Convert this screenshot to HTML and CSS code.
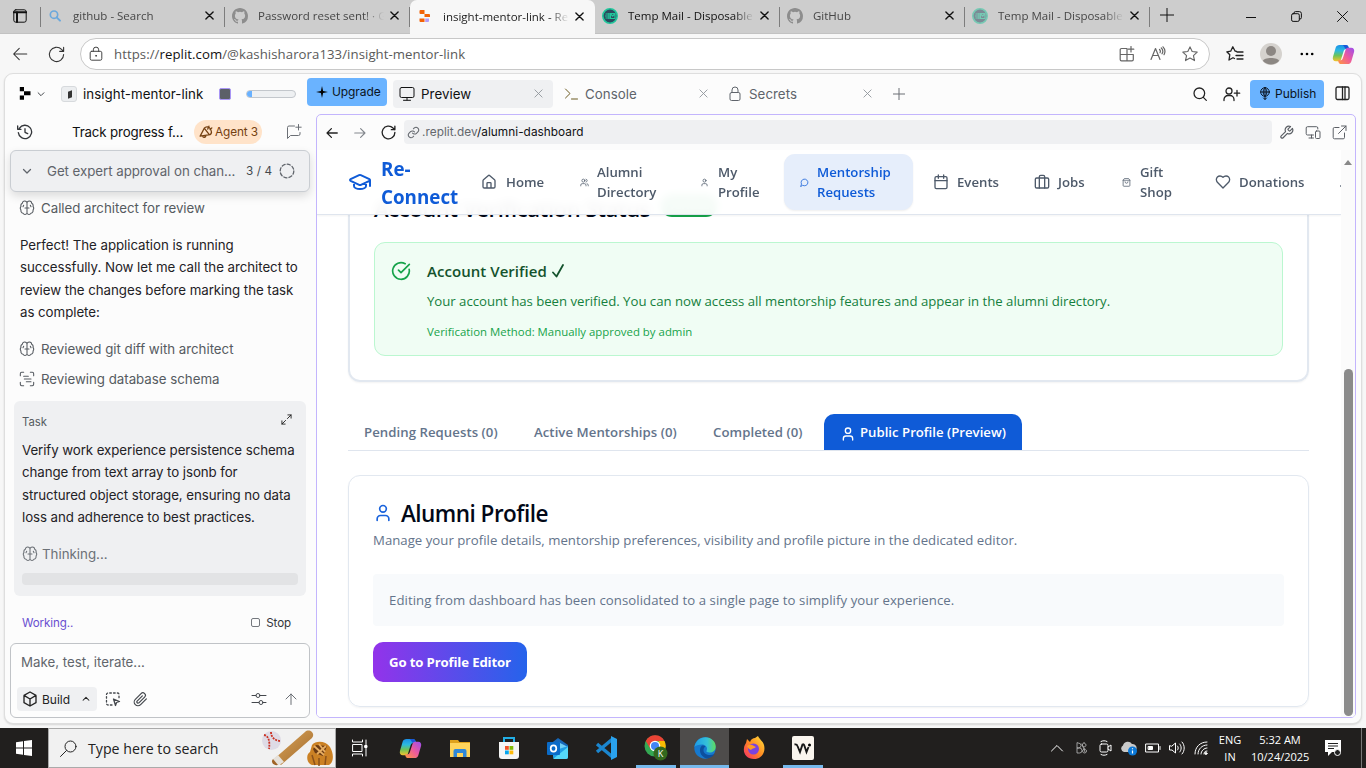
FILE: index.html
```html
<!DOCTYPE html>
<html lang="en">
<head>
<meta charset="utf-8">
<title>insight-mentor-link - Replit</title>
<link rel="stylesheet" href="styles.css">
</head>
<body>
<svg class="sprite" width="0" height="0">
  <defs>
    <linearGradient id="gBlue" x1="0" y1="0" x2="0" y2="1"><stop offset="0" stop-color="#1a8fe8"/><stop offset=".35" stop-color="#2bb9e0"/><stop offset=".65" stop-color="#6cc35a"/><stop offset="1" stop-color="#f5c32c"/></linearGradient>
    <linearGradient id="gPink" x1="1" y1="0" x2="0" y2="1"><stop offset="0" stop-color="#9a4df0"/><stop offset=".5" stop-color="#ee5a9c"/><stop offset="1" stop-color="#ff9a3c"/></linearGradient>
    <linearGradient id="gEdge" x1="0" y1="0" x2="1" y2="0"><stop offset="0" stop-color="#1e9be8"/><stop offset=".6" stop-color="#35c1d8"/><stop offset="1" stop-color="#5fdc5c"/></linearGradient>
    <linearGradient id="gFox" x1="1" y1="0" x2="0" y2="1"><stop offset="0" stop-color="#ffe43c"/><stop offset=".5" stop-color="#ff8a22"/><stop offset="1" stop-color="#f5286c"/></linearGradient>
    <linearGradient id="gBat" x1="0" y1="0" x2="1" y2="1"><stop offset="0" stop-color="#dba65c"/><stop offset="1" stop-color="#a1692a"/></linearGradient>
  </defs>
  <symbol id="x" viewBox="0 0 10 10"><path d="M1 1l8 8M9 1L1 9"/></symbol>
  <symbol id="github" viewBox="0 0 16 16"><path fill="currentColor" stroke="none" d="M8 0C3.58 0 0 3.58 0 8c0 3.54 2.29 6.53 5.47 7.59.4.07.55-.17.55-.38 0-.19-.01-.82-.01-1.49-2.01.37-2.53-.49-2.69-.94-.09-.23-.48-.94-.82-1.13-.28-.15-.68-.52-.01-.53.63-.01 1.08.58 1.23.82.72 1.21 1.87.87 2.33.66.07-.52.28-.87.51-1.07-1.78-.2-3.64-.89-3.64-3.95 0-.87.31-1.59.82-2.15-.08-.2-.36-1.02.08-2.12 0 0 .67-.21 2.2.82a7.6 7.6 0 0 1 4 0c1.53-1.04 2.2-.82 2.2-.82.44 1.1.16 1.92.08 2.12.51.56.82 1.27.82 2.15 0 3.07-1.87 3.75-3.65 3.95.29.25.54.73.54 1.48 0 1.07-.01 1.93-.01 2.2 0 .21.15.46.55.38A8.01 8.01 0 0 0 16 8c0-4.42-3.58-8-8-8z"/></symbol>
  <symbol id="search" viewBox="0 0 24 24"><circle cx="11" cy="11" r="8"/><path d="M17 17l4.500 4.500"/></symbol>
  <symbol id="reload" viewBox="0 0 24 24"><path d="M21 12a9 9 0 1 1-2.600-6.400L21 8M21 3v5h-5"/></symbol>
  <symbol id="left" viewBox="0 0 24 24"><path d="M21 12H4M11 4.500L3.500 12l7.500 7.500"/></symbol>
  <symbol id="right" viewBox="0 0 24 24"><path d="M3 12h17M13 4.500l7.500 7.500-7.500 7.500"/></symbol>
  <symbol id="lock" viewBox="0 0 24 24"><rect x="4" y="9.500" width="16" height="12" rx="2"/><path d="M8 9.500V6a4 4 0 0 1 8 0v3.500"/></symbol>
  <symbol id="star" viewBox="0 0 24 24"><path d="M12 2.500l2.900 6.200 6.700.8-5 4.600 1.400 6.700-6-3.400-6 3.400 1.400-6.700-5-4.600 6.700-.8z"/></symbol>
  <symbol id="down" viewBox="0 0 24 24"><path d="M5 9l7 7 7-7"/></symbol>
  <symbol id="user" viewBox="0 0 24 24"><path d="M19 21v-2a4 4 0 0 0-4-4H9a4 4 0 0 0-4 4v2"/><circle cx="12" cy="7" r="4"/></symbol>
  <symbol id="brain" viewBox="0 0 24 24"><path d="M12 5v14M12 5a3.500 3.500 0 0 0-7-.2A4 4 0 0 0 3 9.500 4.500 4.500 0 0 0 3 15a4 4 0 0 0 3 5 3.500 3.500 0 0 0 6 0M12 5a3.500 3.500 0 0 1 7-.2 4 4 0 0 1 2 4.700 4.500 4.500 0 0 1 0 5.500 4 4 0 0 1-3 5 3.500 3.500 0 0 1-6 0M9 12h6M7 8l-1 2M17 8l1 2"/></symbol>
  <symbol id="copilot" viewBox="0 0 24 24"><path fill="url(#gBlue)" d="M8 2h6.500c1.500 0 2.300.8 2.700 2.200l.6 2H15c-1.500 0-2.400.8-2.900 2.400L9.500 17c-.5 1.500-1.200 2-2.500 2H4C1.500 19 .3 17 1 14.500L3.800 5C4.400 3 5.800 2 8 2z"/><path fill="#1a56d8" d="M11 2h3.500c1.500 0 2.300.8 2.700 2.200l.6 2h-2.500C13 6.200 12.500 2 11 2z"/><path fill="url(#gPink)" d="M16 22H9.500c-1.500 0-2.300-.8-2.700-2.200l-.6-1.800H8.500c1.500 0 2.400-.8 2.900-2.400L14 7.500C14.500 6 15.200 5 16.500 5H20c2.500 0 3.700 2 3 4.500L20.200 19c-.6 2-2 3-4.200 3z"/></symbol>
  <symbol id="tm" viewBox="0 0 16 16"><circle cx="8" cy="8" r="7.200" fill="#2b4a5e" stroke="#21c79c" stroke-width="1.600"/><path fill="none" stroke="#21c79c" stroke-width="1.200" d="M3.500 6h3.500M3 8h4M3.500 10h3.500M7 5v6M8.500 5.500h4.500v5H8.500zM8.500 5.500l2.200 2.500 2.300-2.500"/></symbol>
</svg>

<header class="tabstrip">
  <div class="tab-actions"><svg class="ic" width="14" height="14" viewBox="0 0 14 14"><rect x=".8" y=".8" width="12.400" height="12.400" rx="2"/><path d="M.8 3.300h12.400M4 3v10" stroke-width="2"/></svg></div>
  <div class="tab sep"><svg class="ic fav blue" viewBox="0 0 24 24"><circle cx="10.500" cy="10" r="5.500" stroke-width="2.500"/><path d="M14.500 14l5 5" stroke-width="3"/></svg><span class="tab-title">github - Search</span><svg class="ic close"><use href="#x"/></svg></div>
  <div class="tab sep"><svg class="ic fav grey"><use href="#github"/></svg><span class="tab-title">Password reset sent! · GitHub</span><svg class="ic close"><use href="#x"/></svg></div>
  <div class="tab active"><svg class="fav" viewBox="0 0 16 16"><path fill="#f26207" d="M3.500 2h4v4h-4a1 1 0 0 1-1-1V3a1 1 0 0 1 1-1zM7.500 6H12a1 1 0 0 1 1 1v2H7.500zM2.500 10.500h5V14h-4a1 1 0 0 1-1-1z"/><path fill="#b39cf8" d="M8.200 10.500H12V13a1 1 0 0 1-1 1H8.200z"/></svg><span class="tab-title">insight-mentor-link - Replit</span><svg class="ic close"><use href="#x"/></svg></div>
  <div class="tab sep dark"><svg class="fav"><use href="#tm"/></svg><span class="tab-title">Temp Mail - Disposable Email</span><svg class="ic close"><use href="#x"/></svg></div>
  <div class="tab sep"><svg class="ic fav grey"><use href="#github"/></svg><span class="tab-title">GitHub</span><svg class="ic close"><use href="#x"/></svg></div>
  <div class="tab sep faded"><svg class="fav"><use href="#tm"/></svg><span class="tab-title">Temp Mail - Disposable Email</span><svg class="ic close"><use href="#x"/></svg></div>
  <div class="newtab"><svg class="ic" width="14" height="14" viewBox="0 0 14 14"><path d="M7 0v14M0 7h14"/></svg></div>
  <div class="winctl">
    <svg class="ic" width="10" height="10" viewBox="0 0 10 10"><path d="M0 5.500h10"/></svg>
    <svg class="ic" width="11" height="11" viewBox="0 0 11 11"><rect x=".6" y="2.700" width="7.700" height="7.700" rx="1.500"/><path d="M3 2.500V2A1.400 1.400 0 0 1 4.400.6h4A2 2 0 0 1 10.400 2.600v4A1.400 1.400 0 0 1 9 8h-.5"/></svg>
    <svg class="ic" width="11" height="11" viewBox="0 0 11 11"><path d="M.5.5l10 10M10.500.5l-10 10"/></svg>
  </div>
</header>

<div class="toolbar">
  <svg class="ic nav-ic" width="18" height="18"><use href="#left"/></svg>
  <svg class="ic nav-ic" width="19" height="19"><use href="#reload"/></svg>
  <div class="address">
    <svg class="ic" width="16" height="16" viewBox="0 0 16 16"><rect x="2.200" y="5.300" width="11.600" height="8.900" rx="1.500"/><path d="M5.300 5.300V3.800a2.700 2.700 0 0 1 5.400 0v1.500"/><circle cx="8" cy="9.800" r=".5"/></svg>
    <span class="url">https://<b>replit.com</b>/@kashisharora133/insight-mentor-link</span>
    <div class="address-icons">
      <svg class="ic" width="16" height="16" viewBox="0 0 16 16"><path d="M8 8V2.500H2.500A1.300 1.300 0 0 0 1.200 3.800V13.500A1.300 1.300 0 0 0 2.500 14.800H13A1.300 1.300 0 0 0 14.300 13.500V8.500H1.200M8 8v6.800M12 .5v5.500M9.300 3.200h5.500"/></svg>
      <svg class="ic" width="16" height="16" viewBox="0 0 16 16"><path d="M1 13.500L5.500 2.500 10 13.500M2.600 9.500h5.800M9.500 3.500c1 1 1 2.300.5 3.200M11.300 2c1.700 1.700 1.700 4.200.7 5.800M13 .8c2.300 2.400 2.300 5.500 1 7.900"/></svg>
      <svg class="ic" width="18" height="18"><use href="#star"/></svg>
    </div>
  </div>
  <div class="toolbar-right">
    <svg class="ic" width="18" height="16" viewBox="0 0 18 16"><path d="M10.500 5.300L9 5 6.800.8 4.700 5.200.8 5.800l3 3L3 14l4-2.300 1.500.8M11 6h6M10 9.500h7M11 13h6" stroke-width="1.300"/></svg>
    <svg width="22" height="22" viewBox="0 0 22 22"><circle cx="11" cy="11" r="11" fill="#d5d2ce"/><circle cx="11" cy="8" r="5" fill="#8c8783"/><path fill="#8c8783" d="M3 18c0-4 16-4 16 0a11 11 0 0 1-16 0z"/></svg>
    <svg width="14" height="4" viewBox="0 0 14 4"><circle cx="1.800" cy="2" r="1.300"/><circle cx="7" cy="2" r="1.300"/><circle cx="12.200" cy="2" r="1.300"/></svg>
    <svg width="23" height="23"><use href="#copilot"/></svg>
  </div>
</div>

<main class="page">
  <div class="ide-head">
    <svg class="logo" width="12" height="13" viewBox="0 0 12 13"><path d="M.8 0h4.200v4.300H.8zM5 4.300h6.500v4H5zM.8 8.500H5v4.200H.8z"/></svg>
    <svg class="ic chev" width="10" height="10" stroke-width="2.400"><use href="#down"/></svg>
    <span class="app-ic"><i></i></span>
    <span class="app-name">insight-mentor-link</span>
    <span class="status-box"></span>
    <span class="meter"><i></i></span>
    <button class="upgrade"><svg width="12" height="12" viewBox="0 0 12 12"><path d="M6 0l1.100 4.900L12 6 7.100 7.100 6 12 4.900 7.100 0 6l4.900-1.100z"/></svg>Upgrade</button>
    <div class="ide-tab on"><svg class="ic" width="16" height="16" viewBox="0 0 16 16"><rect x="1" y="1.500" width="14" height="10" rx="1.500"/><path d="M8 11.500v2.500M4.500 14.300h7"/></svg><span>Preview</span><svg class="ic tx"><use href="#x"/></svg></div>
    <div class="ide-tab console"><svg class="ic" width="14" height="14" viewBox="0 0 14 14"><path d="M1.500 2l4.500 4.500L1.500 11M7.500 12h6"/></svg><span>Console</span><svg class="ic tx"><use href="#x"/></svg></div>
    <div class="ide-tab secrets"><svg class="ic lk" width="16" height="16" viewBox="0 0 16 16"><rect x="3" y="6.500" width="10" height="8" rx="1.500"/><path d="M5 6.500V4a3 3 0 0 1 6 0v2.500"/></svg><span>Secrets</span><svg class="ic tx"><use href="#x"/></svg></div>
    <svg class="ic plus" width="12" height="12" viewBox="0 0 12 12"><path d="M6 0v12M0 6h12"/></svg>
    <div class="ide-right">
      <svg class="ic" width="16" height="16"><use href="#search"/></svg>
      <svg class="ic" width="18" height="16" viewBox="0 0 18 16"><circle cx="6" cy="5" r="3"/><path d="M1 14.500v-1a4 4 0 0 1 4-4h2a4 4 0 0 1 4 4v1M14 4.500v5.500M11.300 7.200h5.400"/></svg>
      <button class="publish"><svg class="ic" width="12" height="13" viewBox="0 0 12 13"><circle cx="6" cy="5" r="4.300"/><path d="M6 .7c-2.500 2.500-2.500 6 0 8.600 2.500-2.600 2.500-6.100 0-8.600zM1.700 5h8.600M6 .7v11.600M4.500 11L6 12.500 7.500 11"/></svg>Publish</button>
      <svg class="ic" width="15" height="15" viewBox="0 0 15 15"><rect x="1" y="1" width="13" height="12.500" rx="1.500"/><path d="M7.500 1v12.500M10 1v12.500"/></svg>
    </div>
  </div>

  <div class="columns">
    <aside class="agent">
      <div class="agent-head">
        <svg class="ic" width="16" height="16" viewBox="0 0 24 24" stroke-width="2"><path d="M3.500 6.500A10 10 0 1 1 2 13M1 3v5h5M12 7v5.500l4 2"/></svg>
        <span class="chat-title">Track progress f...</span>
        <span class="badge"><svg class="ic" width="14" height="14" viewBox="0 0 24 24" stroke-width="2.200"><path d="M2 19L9 5.500C12 2 17 3 19 6s3.500 8 0 10.500L2 19zM9 5.500L18 17M6 19c1 3 5 3 6-1M15 7l2-5M19 8l3-3"/></svg>Agent 3</span>
        <svg class="ic chat" width="16" height="16" viewBox="0 0 16 16"><path d="M8.500 2H3a1.500 1.500 0 0 0-1.500 1.500v11l3-3H12.500A1.500 1.500 0 0 0 14 10V8.500M12.500.5V6M9.800 3.200h5.400"/></svg>
      </div>
      <div class="progress-card">
        <svg class="ic" width="12" height="12" stroke-width="2.500"><use href="#down"/></svg>
        <span class="pc-title">Get expert approval on chan...</span><span class="pc-count">3 / 4</span>
        <svg class="ic ring" width="16" height="16" viewBox="0 0 16 16"><circle cx="8" cy="8" r="6.800" stroke-dasharray="3.200 2.140" stroke-width="1.300"/></svg>
      </div>
      <div class="event"><svg class="ic"><use href="#brain"/></svg><span>Called architect for review</span></div>
      <div class="message"><div>Perfect! The application is running</div><div>successfully. Now let me call the architect to</div><div>review the changes before marking the task</div><div>as complete:</div></div>
      <div class="event"><svg class="ic"><use href="#brain"/></svg><span>Reviewed git diff with architect</span></div>
      <div class="event last"><svg class="ic" viewBox="0 0 24 24"><path d="M2 7V4a2 2 0 0 1 2-2h3M17 2h3a2 2 0 0 1 2 2v3M22 17v3a2 2 0 0 1-2 2h-3M7 22H4a2 2 0 0 1-2-2v-3M7 8h7M8 12h10M11 16h7"/></svg><span>Reviewing database schema</span></div>
      <section class="task">
        <div class="task-head"><span>Task</span><svg class="ic" width="11" height="11" viewBox="0 0 12 12"><path d="M7.500 1H11v3.500M11 1L7 5M4.500 11H1V7.500M1 11l4-4"/></svg></div>
        <div class="message"><div>Verify work experience persistence schema</div><div>change from text array to jsonb for</div><div>structured object storage, ensuring no data</div><div>loss and adherence to best practices.</div></div>
        <div class="thinking"><svg class="ic" width="16" height="16"><use href="#brain"/></svg><span>Thinking...</span></div>
        <div class="skeleton"></div>
      </section>
      <div class="working"><span>Working..</span><span class="stop"><i></i>Stop</span></div>
      <div class="composer">
        <div class="placeholder">Make, test, iterate...</div>
        <div class="composer-row">
          <span class="build"><svg class="ic" width="16" height="16" viewBox="0 0 24 24" stroke-width="2"><path d="M12 1.500l9 5v11l-9 5-9-5v-11zM3 6.500l9 5.500 9-5.500M12 12v10.500"/></svg>Build<svg class="ic up" width="10" height="10" stroke-width="2.500"><use href="#down"/></svg></span>
          <svg class="ic" width="16" height="16" viewBox="0 0 16 16"><path stroke-dasharray="1.600 2.200" stroke-width="1.300" d="M7 14H3a1.500 1.500 0 0 1-1.500-1.500v-9A1.500 1.500 0 0 1 3 2h9.500A1.500 1.500 0 0 1 14 3.500V7"/><path d="M8.500 8l6 2.500-3 1-1 3z" stroke-width="1.300"/></svg>
          <svg class="ic clip" width="15" height="15" viewBox="0 0 24 24" stroke-width="1.900"><path d="M21.400 11l-9.200 9.200a6 6 0 0 1-8.500-8.500l9.200-9.200a4 4 0 0 1 5.700 5.700L9.400 17.400a2 2 0 0 1-2.800-2.800L15 6.100"/></svg>
          <svg class="ic sliders" width="16" height="16" viewBox="0 0 16 16"><path d="M1 4.500h4M9 4.500h6M1 11.500h7M12 11.500h3"/><circle cx="7" cy="4.500" r="2"/><circle cx="10" cy="11.500" r="2"/></svg>
          <svg class="ic send" width="12" height="12" viewBox="0 0 12 12"><path d="M6 11.500V1M1 6l5-5 5 5"/></svg>
        </div>
      </div>
    </aside>

    <section class="preview">
      <div class="pv-bar">
        <svg class="ic" width="14" height="14" stroke-width="2.200"><use href="#left"/></svg>
        <svg class="ic fwd" width="14" height="14" stroke-width="2"><use href="#right"/></svg>
        <svg class="ic" width="17" height="17" stroke-width="1.900"><use href="#reload"/></svg>
        <div class="pv-url"><svg class="ic" width="13" height="13" viewBox="0 0 24 24" stroke-width="1.900"><path d="M10 13a5 5 0 0 0 7.500.5l3-3a5 5 0 0 0-7-7l-1.700 1.700M14 11a5 5 0 0 0-7.500-.5l-3 3a5 5 0 0 0 7 7l1.700-1.700"/></svg><span>.replit.dev<b>/alumni-dashboard</b></span></div>
        <div class="pv-icons">
          <svg class="ic" width="15" height="15" viewBox="0 0 24 24" stroke-width="1.900"><path d="M14.700 6.300a1 1 0 0 0 0 1.400l1.600 1.600a1 1 0 0 0 1.400 0l3.800-3.800a6 6 0 0 1-8 8L6.600 20.400a2.100 2.100 0 0 1-3-3l6.900-6.900a6 6 0 0 1 8-8z"/></svg>
          <svg class="ic" width="16" height="15" viewBox="0 0 16 15"><path d="M8.500 10H2.500A1.300 1.300 0 0 1 1.200 8.700V3A1.300 1.300 0 0 1 2.500 1.700h9A1.300 1.300 0 0 1 12.800 3v1M6.500 10v3M4 13h4.500"/><rect x="10.500" y="6" width="4.500" height="7.500" rx="1"/></svg>
          <svg class="ic" width="15" height="15" viewBox="0 0 15 15"><path d="M7 2.500H2.500A1.300 1.300 0 0 0 1.200 3.800v8.700a1.300 1.300 0 0 0 1.300 1.300h8.700a1.300 1.300 0 0 0 1.300-1.300V8M9.500 1h4.500v4.500M14 1L6.500 8.500"/></svg>
        </div>
      </div>
      <div class="viewport">
        <div class="site">
          <nav class="site-nav">
            <svg class="ic cap" width="24" height="24" viewBox="0 0 24 24"><path d="M21.400 10.900a1 1 0 0 0 0-1.800l-8.600-3.900a2 2 0 0 0-1.700 0L2.600 9.100a1 1 0 0 0 0 1.800l8.600 3.900a2 2 0 0 0 1.700 0zM22 10v6M6 12.500V16a6 3 0 0 0 12 0v-3.500"/></svg>
            <div class="brand">Re-<br>Connect</div>
            <a class="l-home"><svg class="ic" width="16" height="16" viewBox="0 0 24 24"><path d="M15 21v-7a1 1 0 0 0-1-1h-4a1 1 0 0 0-1 1v7M3 10a2 2 0 0 1 .7-1.500l7-6a2 2 0 0 1 2.600 0l7 6A2 2 0 0 1 21 10v9a2 2 0 0 1-2 2H5a2 2 0 0 1-2-2z"/></svg><span>Home</span></a>
            <a class="l-dir"><svg class="ic sm" viewBox="0 0 24 24"><path d="M16 21v-2a4 4 0 0 0-4-4H6a4 4 0 0 0-4 4v2M22 21v-2a4 4 0 0 0-3-3.900M16 3.100a4 4 0 0 1 0 7.800"/><circle cx="9" cy="7" r="4"/></svg><span>Alumni<br>Directory</span></a>
            <a class="l-prof"><svg class="ic sm"><use href="#user"/></svg><span>My<br>Profile</span></a>
            <a class="l-ment"><svg class="ic sm" viewBox="0 0 24 24"><path d="M7.900 20A9 9 0 1 0 4 16.100L2 22z"/></svg><span>Mentorship<br>Requests</span></a>
            <a class="l-ev"><svg class="ic" width="16" height="16" viewBox="0 0 24 24"><rect x="3" y="4" width="18" height="18" rx="2"/><path d="M8 1.500v5M16 1.500v5M3 10h18"/></svg><span>Events</span></a>
            <a class="l-jobs"><svg class="ic" width="16" height="16" viewBox="0 0 24 24"><rect x="2" y="6" width="20" height="15" rx="2"/><path d="M16 21V4a2 2 0 0 0-2-2h-4a2 2 0 0 0-2 2v17"/></svg><span>Jobs</span></a>
            <a class="l-gift"><svg class="ic sm" viewBox="0 0 24 24"><path d="M6 2L3 6v14a2 2 0 0 0 2 2h14a2 2 0 0 0 2-2V6l-3-4zM3 6h18M16 10a4 4 0 0 1-8 0"/></svg><span>Gift<br>Shop</span></a>
            <a class="l-don"><svg class="ic" width="16" height="16" viewBox="0 0 24 24"><path d="M19 14c1.500-1.500 3-3.200 3-5.500A5.500 5.500 0 0 0 16.500 3c-1.800 0-3 .5-4.500 2-1.500-1.500-2.700-2-4.500-2A5.500 5.500 0 0 0 2 8.500c0 2.300 1.500 4 3 5.500l7 7z"/></svg><span>Donations</span></a>
            <i class="nub"></i>
          </nav>
          <div class="verify-card">
            <div class="vc-head"><h2>Account Verification Status</h2><span class="pill">Verified</span></div>
            <div class="verified">
              <svg class="ic" width="20" height="20" viewBox="0 0 24 24"><path d="M21.800 10A10 10 0 1 1 17 3.300M9 11l3 3L22 4"/></svg>
              <div><div class="v1">Account Verified <svg class="ic tick" width="12" height="14" viewBox="0 0 12 14"><path d="M1 8.500l3.500 4L11 1"/></svg></div><div class="v2">Your account has been verified. You can now access all mentorship features and appear in the alumni directory.</div><div class="v3">Verification Method: Manually approved by admin</div></div>
            </div>
          </div>
          <div class="site-tabs"><span class="s1">Pending Requests (0)</span><span class="s2">Active Mentorships (0)</span><span class="s3">Completed (0)</span><span class="s4"><svg class="ic" width="16" height="16"><use href="#user"/></svg>Public Profile (Preview)</span></div>
          <div class="profile-card">
            <h1><svg class="ic" width="20" height="20"><use href="#user"/></svg><span>Alumni Profile</span></h1>
            <div class="sub">Manage your profile details, mentorship preferences, visibility and profile picture in the dedicated editor.</div>
            <div class="note"><span>Editing from dashboard has been consolidated to a single page to simplify your experience.</span></div>
            <button class="go"><span>Go to Profile Editor</span></button>
          </div>
        </div>
        <div class="scrollbar"><i class="arrow"></i><i class="thumb"></i></div>
      </div>
    </section>
  </div>
</main>

<footer class="taskbar">
  <div class="start"><svg width="16" height="16" viewBox="0 0 16 16" fill="#fff"><path d="M0 2.300l7-1V7.500H0zM8 1.100L16 0v7.500H8zM0 8.500h7v6.200l-7-1zM8 8.500h8V16l-8-1.100z"/></svg></div>
  <div class="tb-search">
    <svg class="ic" width="17" height="17" viewBox="0 0 17 17"><circle cx="10.500" cy="6.500" r="5.500"/><path d="M6.500 10.500L.5 16.500"/></svg>
    <span>Type here to search</span>
    <svg class="balls" width="74" height="38" viewBox="0 0 74 38"><circle cx="11.500" cy="11.500" r="9.500" fill="#dedbe6"/><path d="M4 6c5 1 6 7 5 14M11 3c0 6 5 9 9.500 9" fill="none" stroke="#cc3324" stroke-width="1.800" stroke-dasharray="2 1"/><path d="M14 30L45 3c4-4 11 1 7 6L21 36z" fill="url(#gBat)"/><path d="M13 30l5-4 6 7-5 3c-3 1-7-3-6-6z" fill="#e6e1da"/><path d="M13 30c-3 3 1 7 5 6z" fill="#a06426"/><path d="M52 16c4-5 14-4 18 2 4 7 4 15-1 18H52c-6-2-6-11-2-13z" fill="#cb8124"/><path d="M53 20l3-4 11 1-4 10-8-3z" fill="#6c3b13"/><path d="M54 17l10 9M59 15l6 8M66 17l-9 8" stroke="#e8ae62" stroke-width="1.800"/><path d="M52 26l3 10M59 29v8M66 27l-1 9" stroke="#8c521a" stroke-width="1.500"/></svg>
  </div>
  <div class="apps">
    <span><svg class="ic" width="18" height="18" viewBox="0 0 18 18"><rect x="2" y="5.500" width="9" height="7"/><path d="M1.500 1v2h10V1M1.500 17v-2h10v2M15 1v16"/><path d="M14 6.500h2v2h-2z" fill="#fff"/></svg></span>
    <span><svg width="23" height="23"><use href="#copilot"/></svg></span>
    <span><svg width="20" height="18" viewBox="0 0 20 18"><path fill="#dfa21c" d="M0 1h8l1.500 2H20v5H0z"/><path fill="#ffd45b" d="M0 4h20v14H0z"/><path fill="#2e87d8" d="M3.500 18v-6a2 2 0 0 1 2-2h9a2 2 0 0 1 2 2v6H13v-4H7v4z"/></svg></span>
    <span><svg width="22" height="24" viewBox="0 0 22 24"><path d="M6 8V2h10v6" fill="none" stroke="#22aee5" stroke-width="2"/><path fill="#f5f5f5" d="M1 6h20v14a3 3 0 0 1-3 3H4a3 3 0 0 1-3-3z"/><path fill="#f35325" d="M7 10h3.800v3.800H7z"/><path fill="#81bc06" d="M11.500 10h3.800v3.800h-3.800z"/><path fill="#05a6f0" d="M7 14.500h3.800v3.800H7z"/><path fill="#ffba08" d="M11.500 14.500h3.800v3.800h-3.800z"/></svg></span>
    <span><svg width="22" height="23" viewBox="0 0 22 23"><path fill="#1667b8" d="M2 8l9-7 10 7v4H2z"/><path fill="#6fd0f8" d="M6 9l5-4 10 5v3H6z"/><path fill="#1f9ee6" d="M6 14l15-5v11a2 2 0 0 1-2 2H8a2 2 0 0 1-2-2z"/><path fill="#55d8f8" d="M6 22l15-12v10a2 2 0 0 1-2 2z"/><rect y="5" width="13" height="13" rx="1" fill="#0a6bc8"/><ellipse cx="6.500" cy="11.500" rx="2.800" ry="3.200" fill="none" stroke="#fff" stroke-width="1.700"/></svg></span>
    <span><svg width="23" height="24" viewBox="0 0 23 24"><path d="M2 16L17 3.500M2 8l15 12.500" stroke="#1b86cf" stroke-width="3.500"/><path fill="#2aa2ee" d="M16 0l6 3v18l-6 3z"/></svg></span>
    <span class="run"><svg width="24" height="26" viewBox="0 0 24 26"><circle cx="11" cy="11" r="10.500" fill="#34a853"/><path fill="#ea4335" d="M1.800 6A10.500 10.500 0 0 1 20.500 6H11l-4.500 8z"/><path fill="#fbbc04" d="M20.500 6A10.500 10.500 0 0 1 11 21.500l4.500-8-1-7.500z"/><circle cx="11" cy="11" r="5.300" fill="#fff"/><circle cx="11" cy="11" r="4" fill="#4285f4"/><circle cx="16.500" cy="18.500" r="7" fill="#33691e"/><text x="16.500" y="22" text-anchor="middle" class="ktxt">K</text></svg></span>
    <span class="edge"><svg width="22" height="22" viewBox="0 0 22 22"><circle cx="11" cy="11" r="10.700" fill="#1679cf"/><path fill="url(#gEdge)" d="M.4 10C1.500 4 6 .3 11.500.3 17.500.3 21.700 5 21.700 9.500c0 4-3 6-6 6-2.500 0-4-1-3-2.300C14 10 11 7.500 8 7.500c-3.500 0-6.500 1-7.600 2.500z"/><path fill="#0d4f9e" d="M8 8.500C4 12 6 20 13 21.500c3-.3 6-2 7.500-4.500-5 2.500-11 .5-11-4 0-2 1-3 2-3.500-1-1-2.500-1.200-3.500-1z"/></svg></span>
    <span><svg width="22" height="24" viewBox="0 0 22 24"><path fill="url(#gFox)" d="M3 7l1-4 3 3c1-3 3-4 5-4l3-2c1 3 5 5 6 9 2 8-3 14-10 14S0 18 1 12c0-2 1-3 2-5z"/><circle cx="10.500" cy="13" r="5.500" fill="#7a43df"/><path fill="#ff9a28" d="M4 10c4-3 7 0 9 1-2 2-4 1-5 3-2-1-3-2-4-4z"/></svg></span>
    <span class="run"><svg width="22" height="24" viewBox="0 0 22 24"><rect width="22" height="24" rx="2" fill="#faf5ee"/><path d="M2.500 8.500c2-.5 2.500 0 3 1.500l2.500 6 2.500-7.500c1-.5 1.500 0 2 1.500l2 6 2-5" fill="none" stroke="#171717" stroke-width="1.900"/><circle cx="17.500" cy="9" r="1.500"/></svg></span>
  </div>
  <div class="tray">
    <svg class="ic" viewBox="0 0 16 16"><path d="M2.500 11L8 5.500l5.500 5.500"/></svg>
    <svg class="ic dim" viewBox="0 0 16 16"><path d="M4 3v10h2.500a2 2 0 0 0 0-5H4h1.500a2 2 0 0 0 0-5zM9 4l3 8M11 3a2 2 0 1 0 .1 0zM11.500 9a2 2 0 1 0 .1 0z" stroke-width=".8"/></svg>
    <svg class="ic" viewBox="0 0 16 16"><rect x="3" y="4" width="8" height="8" rx="1.500"/><path d="M11 7l3-2v6l-3-2M4 1.500c2-1 4-1 6 0M4 14.500c2 1 4 1 6 0"/></svg>
    <svg viewBox="0 0 16 16"><path fill="#c9c9c9" d="M3 12a3.500 3.500 0 0 1-1-6.500A5 5 0 0 1 11 4a4 4 0 0 1 4 6l-5 2z"/><circle cx="11.500" cy="11" r="4.500" fill="#0b78d7"/><path d="M11.500 10.500v3M11.500 8.300v1" stroke="#fff" stroke-width="1.200"/></svg>
    <svg class="ic" viewBox="0 0 16 16"><rect x="1" y="4" width="12.500" height="8"/><path d="M15 6.500v3"/><path d="M3.500 6.500h4v3h-4z" fill="#fff"/></svg>
    <svg class="ic" viewBox="0 0 16 16"><path d="M.5 6v4h2.500L6.500 13V3L3 6zM8.500 6c1 1 1 3 0 4M10.700 4c2 2 2 6 0 8M13 2c3 3 3 9 0 12"/></svg>
    <svg class="ic" viewBox="0 0 16 16"><path d="M2 14C2 7 7 2 14 2M5 14c0-5 4-9 9-9M8 14c0-3 3-6 6-6M11 14c0-2 1-3 3-3"/><circle cx="13" cy="13.500" r="1" fill="#fff"/></svg>
    <div class="lang">ENG<br>IN</div>
    <div class="clock">5:32 AM<br>10/24/2025</div>
    <svg class="notif" width="18" height="18" viewBox="0 0 18 18"><path fill="#fff" d="M1 1h16v12H8l-4 4v-4H1z"/><path d="M4 4.500h10M4 7h10M4 9.500h6" stroke="#222"/><circle cx="13.500" cy="13.500" r="3" fill="#222" stroke="#fff"/></svg>
    <i class="peek"></i>
  </div>
</footer>
</body>
</html>
```
FILE: styles.css
```css
* { box-sizing: border-box; }
body { margin: 0; width: 1366px; height: 768px; overflow: hidden; display: flex; flex-direction: column; background: #f7f7f7; font-family: "Open Sans", "Noto Sans", sans-serif; color: #1b1b1b; white-space: nowrap; }
.sprite { position: absolute; }
svg { display: block; flex: none; }
.ic { fill: none; stroke: currentColor; stroke-linecap: round; stroke-linejoin: round; }
button { border: 0; padding: 0; font: inherit; display: flex; align-items: center; }
i { display: block; flex: none; }
b { font-weight: 400; }

/* browser tabs */
.tabstrip { height: 34px; flex: none; display: flex; background: #cdcdcd; border-bottom: 1px solid #c2c2c2; font-size: 11.500px; color: #464646; }
.tab-actions { width: 41px; margin-right: -1px; padding: 9px 0 0 13px; color: #111; background: linear-gradient(#7d7d7d, #7d7d7d) right 7px / 1px 20px no-repeat; }
.tab { width: 185px; flex: none; display: flex; align-items: center; padding: 0 11px 2px 7px; }
.sep { background: linear-gradient(#7d7d7d, #7d7d7d) right 7px / 1px 20px no-repeat; }
.fav { width: 16px; height: 16px; margin-right: 10px; }
.blue { color: #6ba8dc; }
.grey { color: #8d8d8d; }
.faded .fav { opacity: .5; }
.tab-title { width: 126px; overflow: hidden; -webkit-mask-image: linear-gradient(90deg, #000 84%, transparent 100%); }
.close { width: 9px; height: 9px; margin-left: auto; color: #111; stroke-width: 1.500; }
.active { background: #f7f7f7; border-radius: 7px 7px 0 0; margin-bottom: -1px; color: #1b1b1b; }
.dark { color: #111; }
.newtab { width: 36px; padding: 8px 0 0 10px; color: #111; }
.winctl { margin-left: auto; padding: 0 18px 0 0; display: flex; align-items: center; gap: 35px; color: #111; }

/* address bar */
.toolbar { height: 39px; flex: none; display: flex; align-items: center; padding: 1px 11px 0 11px; }
.nav-ic { margin-right: 18px; stroke-width: 1.400; color: #333; }
.nav-ic + .nav-ic { margin-right: 14px; }
.address { width: 1130px; height: 32px; border: 1px solid #c8c8c8; border-radius: 16px; background: #fff; display: flex; align-items: center; padding: 0 10px 0 7px; color: #444; }
.url { margin-left: 10px; font-size: 13.200px; color: #5a5a5a; letter-spacing: .06px; }
.url b { color: #111; }
.address-icons { margin-left: auto; display: flex; align-items: center; gap: 15px; color: #666; stroke-width: 1.200; }
.address-icons svg:last-child { stroke-width: 1.500; }
.toolbar-right { margin-left: auto; display: flex; align-items: center; gap: 17px; color: #222; }
.toolbar-right svg:nth-child(1) { margin-right: -1px; }
.toolbar-right svg:nth-child(3) { margin: 0 1px 0 1px; }

/* IDE shell */
.page { width: 1358px; height: 651px; margin: 0 0 0 4px; flex: none; background: #fcfcfc; border: 1px solid #dedede; border-radius: 9px; box-shadow: 0 1px 2px #0002; font-family: Inter, "Noto Sans", sans-serif; }
.ide-head { height: 40px; display: flex; align-items: center; padding: 0 11px 1px 14px; font-size: 13.300px; color: #101112; }
.chev { margin: 0 15px 0 5px; color: #44484d; }
.app-ic { width: 16px; height: 16px; background: #eceef0; border: 1px solid #d7dadd; border-radius: 3px; padding: 4px 0 0 6px; }
.app-ic i { width: 4px; height: 7px; background: #333; transform: skewY(-20deg); }
.app-name { width: 142px; padding-left: 6px; letter-spacing: .06px; }
.status-box { width: 12px; height: 12px; background: #5c6068; border: 1px solid #a996f5; border-radius: 2px; }
.meter { width: 50px; height: 8px; margin: 0 11px 0 15px; border: 1px solid #c3c7cc; border-radius: 4px; background: #eef0f2; overflow: hidden; }
.meter i { width: 5px; height: 7px; background: #69b1ff; }
.upgrade, .publish { height: 28px; border-radius: 4px; background: #6ab3ff; color: #0a1422; font-size: 12px; }
.upgrade { width: 80px; margin: -4px 6px 0 0; padding-left: 9px; gap: 4px; letter-spacing: -.1px; }
.ide-tab { height: 28px; width: 164px; border-radius: 4px; display: flex; align-items: center; padding: 0 4px 0 6px; color: #5f646b; }
.ide-tab span { margin-left: 6px; letter-spacing: .05px; }
.ide-tab.on { width: 160px; padding-right: 10px; background: #eff0f2; color: #101112; }
.ide-tab.console { padding: 0 4px 0 11px; width: 159px; }
.console svg:first-child { color: #6b5a20; }
.console span { margin-left: 7px; }
.ide-tab.secrets { padding-left: 15px; }
.tx { width: 9px; height: 9px; margin-left: auto; color: #90959b; }
.plus { margin-left: 17px; color: #6a6e74; }
.ide-right { margin-left: auto; display: flex; align-items: center; gap: 15px; color: #222; }
.ide-right > svg { stroke-width: 1.300; }
.ide-right > svg:first-child { stroke-width: 1.900; }
.publish { width: 74px; margin: 0 -4px 0 -6px; padding-left: 9px; gap: 4px; }
.columns { height: 610px; display: flex; }

/* agent column */
.agent { width: 311px; padding: 0 6px 0 5px; }
.agent-head { height: 36px; display: flex; align-items: center; padding: 0 8px 0 7px; color: #33363a; }
.chat-title { width: 122px; margin-left: 39px; font-size: 13.300px; color: #101112; letter-spacing: -.15px; }
.badge { width: 68px; height: 24px; border-radius: 12px; background: #ffe3c9; color: #744011; display: flex; align-items: center; gap: 2px; padding-left: 5px; font-size: 11.800px; letter-spacing: -.1px; }
.chat { margin-left: auto; color: #6b6f75; }
.progress-card { height: 42px; margin-bottom: 5px; border: 1px solid #c9cdd2; border-radius: 6px; background: #eff0f2; box-shadow: 0 4px 10px #0002; display: flex; align-items: center; padding: 0 14px 0 10px; font-size: 13.300px; color: #5f646b; }
.pc-title { margin-left: 14px; width: 199px; letter-spacing: -.04px; }
.pc-count { width: 33px; font-size: 11.700px; letter-spacing: .1px; color: #44484d; }
.event { height: 22px; display: flex; align-items: center; padding-left: 9px; font-size: 13.300px; letter-spacing: -.02px; color: #565b61; }
.event svg { width: 16px; height: 16px; margin-right: 6px; stroke-width: 1.600; }
.last { margin-top: 8px; }
.message { margin: 15px 0 14px 10px; font-size: 13.300px; letter-spacing: -.05px; line-height: 22.400px; color: #1f2226; height: 90px; }
.task { height: 195px; margin: 11px 4px 0 4px; border-radius: 6px; background: #eff0f2; padding: 8px; }
.task-head { height: 22px; padding-top: 3px; display: flex; align-items: center; justify-content: space-between; font-size: 11.300px; color: #565b61; padding-right: 6px; }
.task-head svg { margin-top: -4px; color: #222; }
.task .message { margin: 8px 0 15px 0; letter-spacing: -.08px; }
.thinking { height: 20px; display: flex; align-items: center; gap: 4px; font-size: 13.300px; color: #6c7177; }
.thinking svg { stroke-width: 1.600; }
.skeleton { height: 12px; margin-top: 9px; border-radius: 4px; background: #e2e3e5; }
.working { height: 47px; padding: 6px 19px 0 12px; display: flex; align-items: center; justify-content: space-between; font-size: 11.600px; color: #6a4fd0; letter-spacing: -.1px; }
.stop { display: flex; align-items: center; gap: 6px; color: #33363a; }
.stop i { width: 9px; height: 9px; border: 1px solid #74787e; border-radius: 2px; }
.composer { height: 75px; border: 1px solid #c0c3c7; border-radius: 6px; padding: 8px 6px 0; background: #fdfdfd; }
.placeholder { padding-left: 4px; font-size: 13.300px; line-height: 20px; height: 34px; color: #62666c; }
.composer-row { height: 26px; display: flex; align-items: center; color: #44484d; }
.build { width: 80px; height: 24px; display: flex; align-items: center; padding: 0 6px 0 5px; border-radius: 4px; background: #eff0f2; font-size: 12px; color: #222; margin-right: 8px; }
.build svg:first-child { margin-right: 4px; }
.up { transform: rotate(180deg); margin-left: auto; }
.clip { margin-left: 12px; }
.sliders { margin-left: auto; }
.send { margin: 0 6px 0 18px; color: #6b6f75; }

/* preview pane */
.preview { width: 1040px; height: 604px; border: 1px solid #c3b5fd; border-radius: 5px; overflow: hidden; }
.pv-bar { height: 35px; display: flex; align-items: center; padding: 0 8px 0 8px; color: #222; }
.fwd { margin: 0 13px 0 14px; color: #83878d; }
.pv-url { width: 868px; height: 24px; margin: -1px 0 0 7px; border-radius: 4px; background: #eff0f2; display: flex; align-items: center; gap: 2px; padding-left: 3px; font-size: 11.800px; letter-spacing: .04px; color: #63676d; }
.pv-url b { color: #101112; }
.pv-icons { margin-left: auto; display: flex; gap: 11px; color: #5b5f65; }
.viewport { height: 567px; display: flex; background: #fff; font-family: "Open Sans", "Noto Sans", sans-serif; }
.site { width: 1024px; flex: none; height: 567px; position: relative; overflow: hidden; padding: 0 32px 0 31px; }
.site-nav { position: absolute; inset: 0 0 auto 0; z-index: 2; height: 65px; display: flex; align-items: center; background: #fffffff2; backdrop-filter: blur(5px); border-bottom: 1px solid #dfe5ee; box-shadow: 0 1px 2px #0000000d; overflow: hidden; font-size: 13.200px; font-weight: 600; line-height: 20px; color: #4e5a6a; }
.site-nav > a, .cap, .brand { flex: none; }
.cap { margin: 0 9px 0 31px; color: #0f5bd7; stroke-width: 2; }
.brand { width: 100px; font-size: 18.800px; line-height: 28px; font-weight: 700; color: #0f5bd7; padding-top: 2px; }
.site-nav a { display: flex; align-items: center; gap: 8px; stroke-width: 2; }
.sm { width: 9px; height: 9px; }
.site-nav a.l-home { width: 99px; gap: 9px; }
.l-dir { width: 120px; }
.site-nav a.l-prof { width: 84px; gap: 9px; }
.site-nav a.l-ment { width: 129px; height: 56px; border-radius: 11px; padding-left: 16px; background: #e6eefb; color: #0f5bd7; box-shadow: 0 1px 2px #0001; }
.l-ev { width: 101px; margin-left: 20px; }
.l-jobs { width: 88px; }
.site-nav a.l-gift { width: 93px; gap: 9px; }
.l-don { width: 125px; }
.nub { width: 3px; height: 2px; background: #8d95a0; margin-top: 8px; }
.verify-card { height: 232px; border: 2px solid #e2e8f0; border-top: 0; border-radius: 0 0 12px 12px; box-shadow: 0 1px 2px #0000000d; padding: 42px 24px 0; }
.vc-head { display: flex; align-items: center; gap: 10px; height: 32px; }
.vc-head h2 { margin: 0; width: 278px; font-size: 22px; line-height: 32px; font-weight: 600; letter-spacing: -.4px; color: #020817; }
.pill { width: 56px; height: 22px; margin: -4px 0 0 -1px; border-radius: 11px; background: #16a34a; color: #fff; font-size: 11px; font-weight: 600; line-height: 20px; text-align: center; }
.verified { height: 114px; margin-top: 18px; border: 1px solid #bbf7d0; border-radius: 11px; background: #f0fdf4; padding: 15px 16px; display: flex; gap: 16px; color: #16a34a; }
.verified > svg { margin: 3px 0 0 0; stroke-width: 2; }
.v1 { height: 26px; line-height: 26px; font-size: 15px; font-weight: 600; color: #14532d; display: flex; align-items: center; gap: 5px; letter-spacing: .05px; }
.tick { stroke-width: 1.800; }
.v2 { margin-top: 6px; line-height: 22px; font-size: 13.200px; letter-spacing: -.02px; color: #15803d; }
.v3 { margin-top: 12px; line-height: 16px; font-size: 11.400px; letter-spacing: .01px; color: #16a34a; }
.site-tabs { height: 37px; margin-top: 32px; border-bottom: 1px solid #dfe5ee; display: flex; font-size: 13.200px; font-weight: 600; line-height: 36px; letter-spacing: .05px; color: #64748b; }
.site-tabs span { flex: none; height: 36px; padding-left: 16px; }
.s1 { width: 170px; }
.s2 { width: 179px; }
.s3 { width: 127px; }
.s4 { width: 198px; background: #0f5bd7; border-radius: 10px 10px 0 0; color: #fff; display: flex; align-items: center; gap: 4px; letter-spacing: 0; }
.s4 svg { margin-top: 4px; stroke-width: 2; }
.profile-card { height: 232px; margin-top: 24px; border: 1px solid #e2e8f0; border-radius: 12px; box-shadow: 0 1px 2px #0000000d; padding: 22px 24px 0; }
.profile-card h1 { margin: 0; height: 32px; display: flex; align-items: center; gap: 8px; font-size: 22.500px; line-height: 32px; font-weight: 600; letter-spacing: -.53px; color: #020817; }
.profile-card h1 svg { margin-top: -3px; color: #1a63dc; stroke-width: 2; }
.sub { font-size: 13.200px; line-height: 20px; letter-spacing: .02px; color: #64748b; }
.note { height: 52px; margin-top: 24px; padding: 16px; border-radius: 4px; background: #f8fafc; font-size: 13.200px; line-height: 20px; letter-spacing: .065px; color: #64748b; }
.go { width: 154px; height: 40px; margin-top: 16px; padding-left: 16px; border-radius: 10px; background: linear-gradient(90deg, #9333ea, #2563eb); color: #fff; font-size: 13.200px; font-weight: 700; letter-spacing: -.15px; }
.scrollbar { width: 14px; flex: none; background: #fbfbfb; padding: 10px 2px 0 3px; }
.arrow { width: 0; border: 4.500px solid transparent; border-top: 0; border-bottom: 5px solid #888; }
.thumb { width: 9px; height: 347px; margin-top: 204px; border-radius: 4.500px; background: #8b8b8b; }

/* taskbar */
.taskbar { height: 40px; margin-top: auto; flex: none; display: flex; background: #211f1e; color: #fff; }
.start { width: 48px; padding: 12px 0 0 16px; }
.tb-search { width: 288px; background: #f1f1f1; border: 1px solid #aaa; display: flex; align-items: center; padding: 0 1px 0 11px; font-size: 14.200px; color: #222; }
.tb-search span { margin-left: 11px; }
.balls { margin-left: auto; }
.apps { display: flex; padding-left: 1px; }
.apps span { width: 49px; display: flex; align-items: center; justify-content: center; border-bottom: 3px solid transparent; padding-top: 3px; }
.apps span:first-child { margin-left: -2px; margin-right: 2px; }
.apps .edge { background: #4e4c4b; border-bottom-color: #76b9ed; }
.apps .run { background: linear-gradient(#76b9ed, #76b9ed) center 37px / 40px 3px no-repeat border-box; }
.ktxt { font-size: 9px; fill: #fff; }
.tray { margin-left: auto; display: flex; align-items: center; gap: 8px; font-size: 11px; line-height: 17px; text-align: center; }
.tray > svg { width: 16px; height: 16px; }
.tray .notif { width: 18px; height: 18px; margin: 0 11px 0 7px; }
.dim { color: #bbb; }
.lang { width: 26px; }
.clock { width: 58px; }
.peek { width: 1px; height: 40px; margin-right: 4px; background: #777; }
```
